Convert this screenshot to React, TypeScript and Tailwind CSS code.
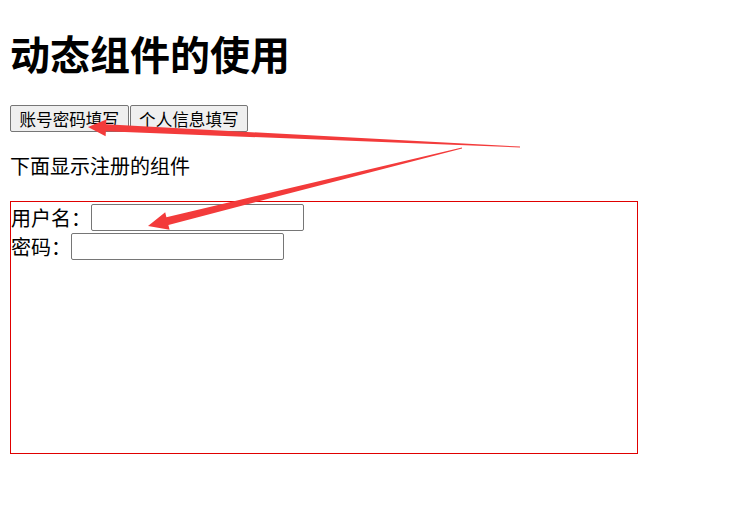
import React from 'react'

const cjk = { fontFamily: '"Noto Sans CJK SC", "Liberation Sans", sans-serif' }

function Arrows() {
  // hand-drawn style annotation arrows, tapered from a thin tail to the head
  return (
    <svg className="pointer-events-none absolute inset-0" width="756" height="509" viewBox="0 0 756 509">
      <polygon
        fill="#f33b3b"
        points="520,146.6 106.1,124.3 106.4,119.4 88,127 105.6,136.2 105.9,131.3 520,147.4"
      />
      <polygon
        fill="#f33b3b"
        points="462.1,148.4 168.4,224.9 169.6,229.8 148,226 165.2,212.3 166.4,217.2 461.9,147.6"
      />
    </svg>
  )
}

export default function App() {
  return (
    <div className="relative min-h-[509px] bg-white px-[10px] pt-[27px] text-black" style={cjk}>
      <h1 className="text-[40px] font-bold leading-[52px]">动态组件的使用</h1>

      <div className="mt-[26px] flex gap-px">
        <button className="h-[27px] rounded-[2px] border border-[#767676] bg-[#efefef] px-[8.5px] text-[16.6px] leading-[22px]">
          账号密码填写
        </button>
        <button className="h-[27px] rounded-[2px] border border-[#767676] bg-[#efefef] px-[8.5px] text-[16.6px] leading-[22px]">
          个人信息填写
        </button>
      </div>

      <p className="mt-[20px] text-[20px] leading-[27px]">下面显示注册的组件</p>

      {/* 注册的组件 */}
      <div className="mt-[22px] h-[253px] w-[628px] border border-[#e00000]">
        <div className="flex h-[29px] items-center pt-[2px] text-[20px] leading-[26px]">
          <span>用户名：</span>
          <input className="h-[27px] w-[213px] rounded-[2px] border border-[#767676] bg-white" />
        </div>
        <div className="flex h-[29px] items-center pt-[2px] text-[20px] leading-[26px]">
          <span>密码：</span>
          <input className="h-[27px] w-[213px] rounded-[2px] border border-[#767676] bg-white" />
        </div>
      </div>

      <Arrows />
    </div>
  )
}
